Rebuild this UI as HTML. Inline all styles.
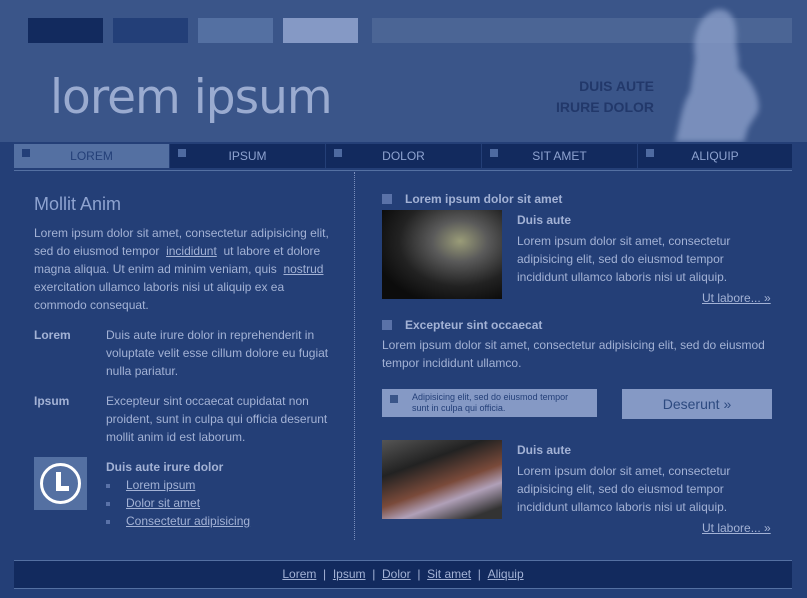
<!DOCTYPE html>
<html><head><style>
*{margin:0;padding:0;box-sizing:border-box}
body{width:807px;height:598px;background:#243f77;font-family:"Liberation Sans",sans-serif;color:#a3b2d5;font-size:12px;position:relative;overflow:hidden}
.a{position:absolute}
.hdr{left:0;top:0;width:807px;height:142px;background:#3a5589}
a{color:#a3b2d5}
.nav{top:144px;height:24px;width:155px;background:#122a5e;text-align:center;line-height:24px;font-size:12px;color:#8ea3d0}
.nav i{position:absolute;left:8px;top:5px;width:8px;height:8px;background:#4e6aa0}
p{line-height:18px}
.sq{width:10px;height:10px;background:#5a72a8}
b{color:#a3b2d5}
</style></head><body>
<div class="a hdr"></div>
<div class="a" style="left:28px;top:18px;width:75px;height:25px;background:#122a5e"></div>
<div class="a" style="left:113px;top:18px;width:75px;height:25px;background:#233f78"></div>
<div class="a" style="left:198px;top:18px;width:75px;height:25px;background:#5470a2"></div>
<div class="a" style="left:283px;top:18px;width:75px;height:25px;background:#8599c5"></div>
<div class="a" style="left:372px;top:18px;width:420px;height:25px;background:#4e6797;opacity:.9"></div>
<svg class="a" style="left:660px;top:0px" width="120" height="142"><defs><filter id="f"><feGaussianBlur stdDeviation="3"/></filter></defs><path d="M55 10 C70 6 78 20 76 40 C76 50 80 60 78 68 C90 78 102 98 98 112 L88 128 L84 142 L15 142 C20 124 22 104 30 92 L35 58 C32 42 35 18 55 10 Z" fill="#8ea2cc" opacity=".75" filter="url(#f)"/></svg>
<div class="a" style="left:50px;top:70px;font-family:'DejaVu Sans',sans-serif;font-size:47px;color:#9aabd0;letter-spacing:-1px">lorem ipsum</div>
<div class="a" style="left:500px;top:76px;width:154px;text-align:right;font-weight:bold;font-size:14px;line-height:21px;color:#22386a">DUIS AUTE<br>IRURE DOLOR</div>
<div class="a nav" style="left:14px;background:#5470a2;color:#233f78"><i style="background:#233f78"></i>LOREM</div>
<div class="a nav" style="left:170px"><i></i>IPSUM</div>
<div class="a nav" style="left:326px"><i></i>DOLOR</div>
<div class="a nav" style="left:482px"><i></i>SIT AMET</div>
<div class="a nav" style="left:638px;width:154px"><i></i>ALIQUIP</div>
<div class="a" style="left:14px;top:170px;width:778px;height:1px;background:#5470a2"></div>
<div class="a" style="left:354px;top:172px;height:368px;border-left:1px dotted #7b8fbd"></div>

<div class="a" style="left:34px;top:194px;font-size:18px;color:#8ea3d0">Mollit Anim</div>
<p class="a" style="left:34px;top:224px;width:300px">Lorem ipsum dolor sit amet, consectetur adipisicing elit, sed do eiusmod tempor &nbsp;<a href="#">incididunt</a>&nbsp; ut labore et dolore magna aliqua. Ut enim ad minim veniam, quis &nbsp;<a href="#">nostrud</a> exercitation ullamco laboris nisi ut aliquip ex ea commodo consequat.</p>
<b class="a" style="left:34px;top:326px;line-height:18px">Lorem</b>
<p class="a" style="left:106px;top:326px;width:232px">Duis aute irure dolor in reprehenderit in voluptate velit esse cillum dolore eu fugiat nulla pariatur.</p>
<b class="a" style="left:34px;top:392px;line-height:18px">Ipsum</b>
<p class="a" style="left:106px;top:392px;width:232px">Excepteur sint occaecat cupidatat non proident, sunt in culpa qui officia deserunt mollit anim id est laborum.</p>
<div class="a" style="left:34px;top:457px;width:53px;height:53px;background:#5470a2"></div>
<svg class="a" style="left:39px;top:462px" width="43" height="43"><circle cx="21.5" cy="21.5" r="19" fill="none" stroke="#fff" stroke-width="3"/><path d="M17 10 V29 H30 V24 H22 V10 Z" fill="#fff"/></svg>
<b class="a" style="left:106px;top:458px;line-height:18px">Duis aute irure dolor</b>
<div class="a" style="left:106px;top:476px;line-height:18px">
<div><span style="display:inline-block;width:4px;height:4px;background:#5a72a8;margin-right:16px;vertical-align:middle"></span><a href="#">Lorem ipsum</a></div>
<div><span style="display:inline-block;width:4px;height:4px;background:#5a72a8;margin-right:16px;vertical-align:middle"></span><a href="#">Dolor sit amet</a></div>
<div><span style="display:inline-block;width:4px;height:4px;background:#5a72a8;margin-right:16px;vertical-align:middle"></span><a href="#">Consectetur adipisicing</a></div>
</div>

<div class="a sq" style="left:382px;top:194px"></div>
<b class="a" style="left:405px;top:190px;line-height:18px">Lorem ipsum dolor sit amet</b>
<div class="a" style="left:382px;top:210px;width:120px;height:89px;background:radial-gradient(ellipse at 65% 35%,#9a9c78 0,#5a5a5a 25%,#222 55%,#0c0c0c 80%)"></div>
<b class="a" style="left:517px;top:211px;line-height:18px">Duis aute</b>
<p class="a" style="left:517px;top:232px;width:260px">Lorem ipsum dolor sit amet, consectetur adipisicing elit, sed do eiusmod tempor incididunt ullamco laboris nisi ut aliquip.</p>
<a class="a" href="#" style="left:702px;top:289px;line-height:18px">Ut labore... »</a>
<div class="a sq" style="left:382px;top:320px"></div>
<b class="a" style="left:405px;top:316px;line-height:18px">Excepteur sint occaecat</b>
<p class="a" style="left:382px;top:336px;width:400px">Lorem ipsum dolor sit amet, consectetur adipisicing elit, sed do eiusmod tempor incididunt ullamco.</p>
<div class="a" style="left:382px;top:389px;width:215px;height:28px;background:#8599c5;color:#233f78;font-size:9px;line-height:11px;padding:3px 0 0 30px">Adipisicing elit, sed do eiusmod tempor<br>sunt in culpa qui officia.<span style="position:absolute;left:8px;top:6px;width:8px;height:8px;background:#3a5589"></span></div>
<div class="a" style="left:622px;top:389px;width:150px;height:30px;background:#8599c5;color:#2d4a80;font-size:14px;line-height:30px;text-align:center">Deserunt »</div>
<div class="a" style="left:382px;top:440px;width:120px;height:79px;background:linear-gradient(160deg,#555 0,#222 30%,#7a4a3a 55%,#b0a0b8 70%,#333 90%)"></div>
<b class="a" style="left:517px;top:441px;line-height:18px">Duis aute</b>
<p class="a" style="left:517px;top:462px;width:260px">Lorem ipsum dolor sit amet, consectetur adipisicing elit, sed do eiusmod tempor incididunt ullamco laboris nisi ut aliquip.</p>
<a class="a" href="#" style="left:702px;top:519px;line-height:18px">Ut labore... »</a>

<div class="a" style="left:14px;top:560px;width:778px;height:29px;background:#122a5e;border-top:1px solid #5470a2;border-bottom:1px solid #5470a2;text-align:center;line-height:27px;color:#a3b2d5">
<a href="#">Lorem</a> &nbsp;| &nbsp;<a href="#">Ipsum</a> &nbsp;| &nbsp;<a href="#">Dolor</a> &nbsp;| &nbsp;<a href="#">Sit amet</a> &nbsp;| &nbsp;<a href="#">Aliquip</a></div>
</body></html>
